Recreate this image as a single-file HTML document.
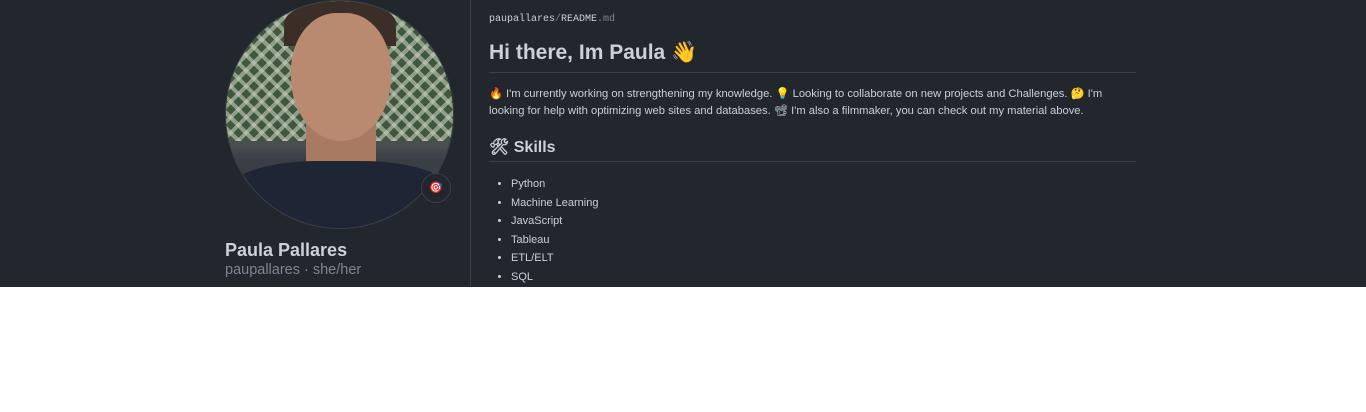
<!DOCTYPE html>
<html><head><meta charset="utf-8"><style>
body{margin:0;width:1366px;height:412px;background:#fff;overflow:hidden;font-family:"Liberation Sans",sans-serif}
#d{position:absolute;left:0;top:0;width:1366px;height:287px;background:#22262d;overflow:hidden}
.vl{position:absolute;left:470px;top:0;width:1px;height:287px;background:#3a3f46}
.av{position:absolute;left:225px;top:0;width:227px;height:227px;border-radius:50%;overflow:hidden;border:1px solid #3a3f46;
background:linear-gradient(#3f5a3c 0,#3f573b 60%,#4a4d50 64%,#3a3f46 70%);}
.av .lat{position:absolute;inset:0;background:repeating-linear-gradient(45deg,transparent 0 7px,rgba(235,235,225,.6) 7px 11px),repeating-linear-gradient(-45deg,transparent 0 7px,rgba(235,235,225,.6) 7px 11px);height:140px;opacity:.8}
.av .face{position:absolute;left:65px;top:12px;width:100px;height:128px;border-radius:45% 45% 50% 50%;background:#b98a70}
.av .hair{position:absolute;left:58px;top:0;width:112px;height:45px;border-radius:50% 50% 0 0;background:#3b2e28}
.av .neck{position:absolute;left:80px;top:120px;width:70px;height:60px;background:#a97a62}
.av .shirt{position:absolute;left:0;top:160px;width:227px;height:80px;background:#1e2535;border-radius:40% 40% 0 0}
.badge{position:absolute;left:421px;top:173px;width:28px;height:28px;border-radius:50%;background:#22262d;border:1px solid #3a3f46;font-size:11px;text-align:center;line-height:28px}
.name{position:absolute;left:225px;top:240px;color:#c9d1d9;font-size:18px;font-weight:bold}
.sub{position:absolute;left:225px;top:262px;color:#7d8590;font-size:14.5px}
.main{position:absolute;left:489px;top:0;width:647px;color:#c9d1d9}
.crumb{position:absolute;top:14px;font-family:"Liberation Mono",monospace;font-size:10px;color:#c9d1d9}
.crumb i{font-style:normal;color:#7d8590}
h1{position:absolute;top:41px;margin:0;font-size:21px;font-weight:bold;color:#c9d1d9;width:647px;height:31px;border-bottom:1px solid #3a3f46}
p{position:absolute;top:86px;margin:0;font-size:11.2px;line-height:16.5px;color:#c9d1d9;width:647px}
h2{position:absolute;top:137px;margin:0;font-size:16px;font-weight:bold;width:647px;height:24px;border-bottom:1px solid #3a3f46}
ul{position:absolute;top:175px;margin:0;padding-left:22px;font-size:11px;line-height:18.6px}
</style></head><body><div id="d">
<div class="av"><div class="lat"></div><div class="hair"></div><div class="neck"></div><div class="face"></div><div class="shirt"></div></div>
<div class="badge">🎯</div>
<div class="name">Paula Pallares</div>
<div class="sub">paupallares · she/her</div>
<div class="vl"></div>
<div class="main">
<div class="crumb">paupallares<i>/</i>README<i>.md</i></div>
<h1>Hi there, Im Paula 👋</h1>
<p>🔥 I'm currently working on strengthening my knowledge. 💡 Looking to collaborate on new projects and Challenges. 🤔 I'm looking for help with optimizing web sites and databases. 📽 I'm also a filmmaker, you can check out my material above.</p>
<h2>🛠 Skills</h2>
<ul><li>Python</li><li>Machine Learning</li><li>JavaScript</li><li>Tableau</li><li>ETL/ELT</li><li>SQL</li></ul>
</div></div></body></html>
